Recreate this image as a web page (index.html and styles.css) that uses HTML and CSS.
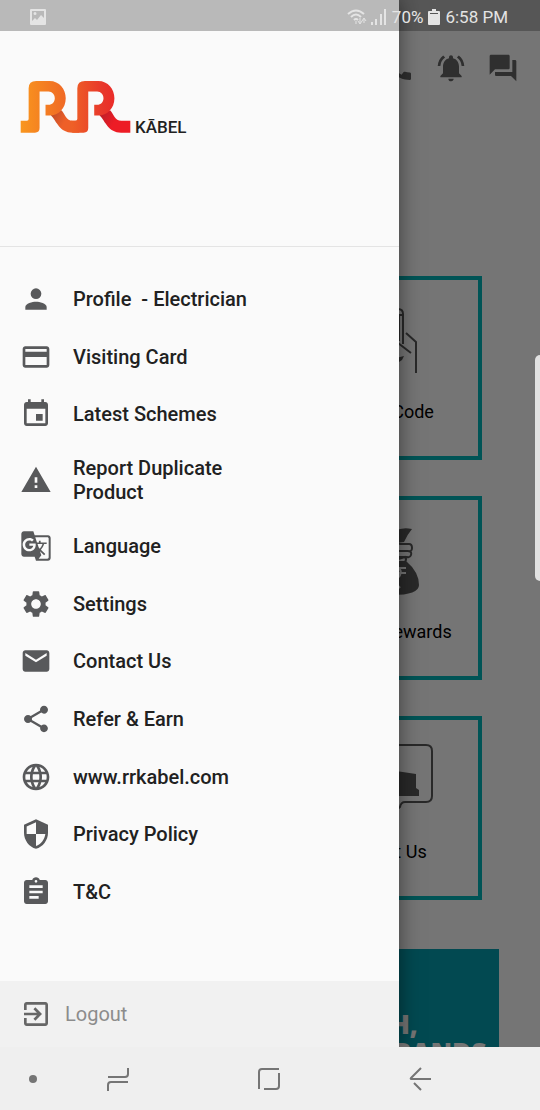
FILE: index.html
```html
<!DOCTYPE html>
<html lang="en">
<head>
<meta charset="utf-8">
<meta name="viewport" content="width=device-width, initial-scale=1">
<title>RR Kabel</title>
<link rel="stylesheet" href="styles.css">
</head>
<body>
<div class="phone">
  <div class="screen">
    <main class="home">
      <header class="toolbar">
        <button class="icon-button" aria-label="Call"><svg class="icon" viewBox="0 0 24 24"><path d="M20.01 15.38c-1.23 0-2.42-.2-3.53-.56a.98.98 0 0 0-1.01.24l-1.57 1.97c-2.83-1.35-5.48-3.9-6.89-6.83l1.95-1.66c.27-.28.35-.67.24-1.02-.37-1.11-.56-2.3-.56-3.53 0-.54-.45-.99-.99-.99H4.19C3.65 3 3 3.24 3 3.99 3 13.28 10.73 21 20.01 21c.71 0 .99-.63.99-1.18v-3.45c0-.54-.45-.99-.99-.99z"/></svg></button>
        <button class="icon-button" aria-label="Notifications"><svg class="icon" viewBox="0 0 24 24"><path d="M7.58 4.08 6.15 2.65C3.75 4.48 2.17 7.3 2.03 10.5h2a8.45 8.45 0 0 1 3.55-6.42zM19.97 10.5h2c-.15-3.2-1.73-6.02-4.12-7.85l-1.42 1.43a8.495 8.495 0 0 1 3.54 6.42zM18 11c0-3.07-1.64-5.64-4.5-6.32V4c0-.83-.67-1.5-1.5-1.5s-1.5.67-1.5 1.5v.68C7.63 5.36 6 7.92 6 11v5l-2 2v1h16v-1l-2-2v-5zm-6 11c.14 0 .27-.01.4-.04.65-.14 1.18-.58 1.44-1.18.1-.24.15-.5.15-.78h-4c.01 1.1.9 2 2.01 2z"/></svg></button>
        <button class="icon-button" aria-label="Messages"><svg class="icon" viewBox="0 0 24 24"><path d="M21 6h-2v9H6v2c0 .55.45 1 1 1h11l4 4V7c0-.55-.45-1-1-1zm-4 6V3c0-.55-.45-1-1-1H3c-.55 0-1 .45-1 1v14l4-4h10c.55 0 1-.45 1-1z"/></svg></button>
      </header>
      <section class="tiles">
        <a class="tile" href="#code">
          <svg class="tile-art" viewBox="0 0 88 72" fill="none" stroke="currentColor" stroke-width="2"><path d="M24 40V10q0-5 5-5h23q5 0 5 5v30M28 11h28M53 11v26M60 29l10 9v31M52 39l13 10M24 44l14 14v11" stroke-linejoin="round"/><path fill="currentColor" stroke="none" d="m50 54 8-2-2 4-6 4z"/></svg>
          <span>Enter Code</span>
        </a>
        <a class="tile" href="#rewards">
          <svg class="tile-art" viewBox="0 0 88 72"><path fill="currentColor" d="M50 19 38 8q5-4 11-1 7-4 17-2-5 6-8 13zM38 37h22q13 11 13 24 0 10-27 10T19 61q0-13 19-24z"/><path d="M42 20q7-3 12 0h9q3 0 3 4t-4 3h-9m10 0q3 1 2 4t-4 2h-9m7 0q2 2 0 5H42z" fill="none" stroke="currentColor" stroke-width="2"/><path class="coin" d="M43 44h17M43 49h17M43 44h5q9 0 6 7-1 4-8 4l8 9" fill="none" stroke-width="2"/></svg>
          <span>Check Rewards</span>
        </a>
        <a class="tile" href="#about">
          <svg class="tile-art" viewBox="0 0 88 72"><path d="M8 1h72q6 0 6 6v45q0 6-6 6H59q-4 0-5 5l-10 8-8-13H8q-6 0-6-6V7q0-6 6-6z" fill="none" stroke="currentColor" stroke-width="2"/><path fill="currentColor" d="M24 34 50 27l20 3v14l3 2v6H24z"/></svg>
          <span>About Us</span>
        </a>
      </section>
      <section class="banner"><p>A SWITCH,<br>TO BIG BRANDS</p></section>
    </main>
    <div class="scrim"></div>

    <aside class="drawer">
      <div class="brand">
        <svg class="brand-mark" viewBox="62 243 333 157" role="img" aria-label="RR">
          <defs>
            <linearGradient id="warm" gradientUnits="userSpaceOnUse" x1="63" y1="0" x2="394" y2="0"><stop offset="0" stop-color="#f9961e"/><stop offset=".4" stop-color="#f06a25"/><stop offset=".75" stop-color="#e8372b"/><stop offset="1" stop-color="#ee1c25"/></linearGradient>
            <linearGradient id="leg1" x1="0" y1="0" x2="1" y2=".4"><stop offset="0" stop-color="#b84a2a"/><stop offset=".6" stop-color="#ee5f28"/></linearGradient>
            <linearGradient id="leg2" x1="0" y1="0" x2="1" y2=".4"><stop offset="0" stop-color="#b3202a"/><stop offset=".6" stop-color="#ed1c25"/></linearGradient>
          </defs>
          <path fill="url(#leg1)" d="M153 345 186 331C197 343 200 363 220 363H240V399H219C181 399 173 367 153 345z"/>
          <path fill="url(#leg2)" d="M300 345 333 331C344 343 347 363 367 363H394V399H366C328 399 320 367 300 345z"/>
          <path fill="url(#warm)" d="M63 363H82Q87 363 87 358V265Q87 243 110 243H150C180 243 199 268 199 295C199 325 178 347 150 347H138V315H147C158 315 166 306 166 295S158 275 147 275H120V385Q120 399 106 399H63z"/>
          <path fill="url(#warm)" d="M215 363H228Q234 363 234 358V265Q234 243 257 243H297C327 243 346 268 346 295C346 325 325 347 297 347H285V315H294C305 315 313 306 313 295S305 275 294 275H267V385Q267 399 253 399H219z"/>
        </svg>
        <span class="brand-name">KĀBEL</span>
      </div>
      <nav class="menu">
        <a class="menu-item" href="#profile"><svg class="icon" viewBox="0 0 24 24"><circle cx="12" cy="8" r="4"/><path d="M12 14c-2.670 0-8 1.340-8 4v2h16v-2c0-2.660-5.330-4-8-4z"/></svg><span>Profile&nbsp; - Electrician</span></a>
        <a class="menu-item" href="#card"><svg class="icon" viewBox="0 0 24 24"><path d="M20 4H4c-1.110 0-1.990.89-1.990 2L2 18c0 1.110.89 2 2 2h16c1.110 0 2-.89 2-2V6c0-1.110-.89-2-2-2zm0 14H4v-6h16v6zm0-10H4V6h16v2z"/></svg><span>Visiting Card</span></a>
        <a class="menu-item" href="#schemes"><svg class="icon" viewBox="0 0 24 24"><path d="M17 12h-5v5h5v-5zM16 1v2H8V1H6v2H5c-1.110 0-1.990.9-1.990 2L3 19c0 1.100.89 2 2 2h14c1.100 0 2-.9 2-2V5c0-1.100-.9-2-2-2h-1V1h-2zm3 18H5V8h14v11z"/></svg><span>Latest Schemes</span></a>
        <a class="menu-item menu-item-tall" href="#report"><svg class="icon" viewBox="0 0 24 24"><path d="M1 21h22L12 2 1 21zm12-3h-2v-2h2v2zm0-4h-2v-4h2v4z"/></svg><span>Report Duplicate Product</span></a>
        <a class="menu-item" href="#language"><svg class="icon" viewBox="0 0 24 24"><path d="M21 4H11l-1-3H3c-1.100 0-2 .9-2 2v15c0 1.100.9 2 2 2h8l1 3h9c1.100 0 2-.9 2-2V6c0-1.100-.9-2-2-2zM7 16c-2.760 0-5-2.240-5-5s2.240-5 5-5c1.350 0 2.480.5 3.350 1.300L9.030 8.570c-.38-.36-1.040-.78-2.030-.78-1.740 0-3.150 1.440-3.150 3.210S5.260 14.210 7 14.210c2.010 0 2.840-1.440 2.920-2.410H7v-1.710h4.680c.07.31.12.61.12 1.020C11.800 13.970 9.890 16 7 16zm6.170-5.420h3.700c-.43 1.250-1.110 2.430-2.050 3.470-.31-.35-.6-.72-.86-1.100l-.79-2.370zm8.330 9.920c0 .55-.45 1-1 1H14l2-2.500-1.040-3.100 3.100 3.100.92-.92-3.300-3.250.02-.02c1.130-1.250 1.930-2.690 2.400-4.220H20v-1.300h-4.530V8h-1.290v1.290h-1.440L11.460 5.500h9.040c.55 0 1 .45 1 1v14z"/></svg><span>Language</span></a>
        <a class="menu-item" href="#settings"><svg class="icon" viewBox="0 0 24 24"><path d="M19.140 12.940c.04-.3.06-.61.06-.94 0-.32-.02-.64-.07-.94l2.030-1.580c.18-.14.23-.41.12-.61l-1.920-3.320c-.12-.22-.37-.29-.59-.22l-2.390.96c-.5-.38-1.030-.7-1.620-.94l-.36-2.540c-.04-.24-.24-.41-.48-.41h-3.840c-.24 0-.43.17-.47.41l-.36 2.540c-.59.24-1.130.57-1.620.94l-2.390-.96c-.22-.08-.47 0-.59.22L2.740 8.870c-.12.21-.08.47.12.61l2.030 1.580c-.05.3-.09.63-.09.94s.02.64.07.94l-2.030 1.580c-.18.14-.23.41-.12.61l1.920 3.320c.12.22.37.29.59.22l2.390-.96c.5.38 1.030.7 1.620.94l.36 2.540c.05.24.24.41.48.41h3.840c.24 0 .44-.17.47-.41l.36-2.540c.59-.24 1.130-.56 1.620-.94l2.390.96c.22.08.47 0 .59-.22l1.920-3.320c.12-.22.07-.47-.12-.61l-2.010-1.580zM12 15.600c-1.980 0-3.600-1.620-3.600-3.600s1.620-3.600 3.600-3.600 3.600 1.620 3.600 3.600-1.620 3.600-3.600 3.600z"/></svg><span>Settings</span></a>
        <a class="menu-item" href="#contact"><svg class="icon" viewBox="0 0 24 24"><path d="M20 4H4c-1.100 0-1.990.9-1.990 2L2 18c0 1.100.9 2 2 2h16c1.100 0 2-.9 2-2V6c0-1.100-.9-2-2-2zm0 4-8 5-8-5V6l8 5 8-5v2z"/></svg><span>Contact Us</span></a>
        <a class="menu-item" href="#refer"><svg class="icon" viewBox="0 0 24 24"><path d="M18 16.080c-.76 0-1.440.3-1.960.77L8.910 12.700c.05-.23.09-.46.09-.7s-.04-.47-.09-.7l7.050-4.110c.54.5 1.250.81 2.040.81 1.660 0 3-1.340 3-3s-1.340-3-3-3-3 1.340-3 3c0 .24.04.47.09.7L8.040 9.810C7.500 9.310 6.790 9 6 9c-1.660 0-3 1.340-3 3s1.340 3 3 3c.79 0 1.500-.31 2.040-.81l7.120 4.160c-.05.21-.08.43-.08.65 0 1.610 1.310 2.920 2.920 2.920s2.920-1.310 2.920-2.920-1.310-2.920-2.920-2.920z"/></svg><span>Refer &amp; Earn</span></a>
        <a class="menu-item" href="#site"><svg class="icon" viewBox="0 0 24 24"><path d="M11.990 2C6.470 2 2 6.480 2 12s4.470 10 9.990 10C17.520 22 22 17.520 22 12S17.520 2 11.990 2zm6.930 6h-2.950c-.32-1.250-.78-2.450-1.380-3.560 1.840.63 3.370 1.910 4.330 3.560zM12 4.040c.83 1.200 1.480 2.530 1.910 3.960h-3.820c.43-1.430 1.080-2.760 1.910-3.960zM4.260 14C4.100 13.360 4 12.690 4 12s.1-1.360.26-2h3.380c-.08.66-.14 1.320-.14 2s.06 1.340.14 2H4.260zm.82 2h2.950c.32 1.250.78 2.450 1.380 3.560-1.840-.63-3.370-1.900-4.330-3.560zm2.950-8H5.080c.96-1.660 2.490-2.930 4.330-3.560C8.810 5.550 8.350 6.750 8.030 8zM12 19.960c-.83-1.200-1.480-2.530-1.910-3.960h3.820c-.43 1.430-1.080 2.760-1.910 3.960zM14.340 14H9.660c-.09-.66-.16-1.320-.16-2s.07-1.350.16-2h4.680c.09.65.16 1.320.16 2s-.07 1.340-.16 2zm.25 5.560c.6-1.110 1.060-2.310 1.380-3.560h2.950c-.96 1.650-2.490 2.930-4.330 3.560zM16.360 14c.08-.66.14-1.320.14-2s-.06-1.340-.14-2h3.380c.16.640.26 1.310.26 2s-.1 1.360-.26 2h-3.380z"/></svg><span>www.rrkabel.com</span></a>
        <a class="menu-item" href="#privacy"><svg class="icon" viewBox="0 0 24 24"><path d="M12 1 3 5v6c0 5.550 3.840 10.740 9 12 5.160-1.260 9-6.450 9-12V5l-9-4zm0 10.990h7c-.53 4.120-3.280 7.790-7 8.940V12H5V6.300l7-3.110v8.800z"/></svg><span>Privacy Policy</span></a>
        <a class="menu-item" href="#terms"><svg class="icon" viewBox="0 0 24 24"><path d="M19 3h-4.180C14.400 1.840 13.300 1 12 1c-1.300 0-2.400.84-2.820 2H5c-1.100 0-2 .9-2 2v14c0 1.100.9 2 2 2h14c1.100 0 2-.9 2-2V5c0-1.100-.9-2-2-2zm-7 0c.55 0 1 .45 1 1s-.45 1-1 1-1-.45-1-1 .45-1 1-1zm2 14H7v-2h7v2zm3-4H7v-2h10v2zm0-4H7V7h10v2z"/></svg><span>T&amp;C</span></a>
      </nav>
      <button class="logout"><svg class="icon" viewBox="0 0 24 24"><path d="M10.090 15.590 11.500 17l5-5-5-5-1.410 1.410L12.670 11H3v2h9.670l-2.580 2.590zM19 3H5c-1.110 0-2 .9-2 2v4h2V5h14v14H5v-4H3v4c0 1.100.89 2 2 2h14c1.100 0 2-.9 2-2V5c0-1.100-.9-2-2-2z"/></svg><span>Logout</span></button>
    </aside>

    <div class="status">
      <svg class="status-photo" viewBox="0 0 16 16"><path fill-rule="evenodd" d="M1 0h14q1 0 1 1v14q0 1-1 1H1q-1 0-1-1V1q0-1 1-1zm1 2v10l3-3 2 2 4-5 3 3V2zm3 1a1.500 1.500 0 1 1 0 3 1.500 1.500 0 0 1 0-3z"/></svg>
      <svg class="status-wifi" viewBox="0 0 20 16" fill="none" stroke="currentColor" stroke-width="2"><path d="M1 5q8-7 16 0M4 8q5-5 10 0M7 11q2-2 4 0"/><path d="m9 12v3M13 9v5m-2-2 2 3 2-3M17 14v-4m-2 2 2-3 2 3" stroke-width="1"/></svg>
      <svg class="status-signal" viewBox="0 0 16 16"><path d="M0 13h2v3H0zM4 10h2v6H4zM9 5h2v11H9zM13 0h2v16h-2z"/></svg>
      <span>70%</span>
      <svg class="status-battery" viewBox="0 0 12 16"><path fill-rule="evenodd" d="M4 0h4v2h3q1 0 1 1v12q0 1-1 1H1q-1 0-1-1V3q0-1 1-1h3zM2 4v1h8V4z"/></svg>
      <span>6:58 PM</span>
    </div>
    <div class="edge-handle"></div>
  </div>

  <nav class="system-nav">
    <button class="system-dot" aria-label="Pin navigation bar"><svg viewBox="0 0 8 8"><circle cx="4" cy="4" r="4" fill="currentColor"/></svg></button>
    <button aria-label="Recent apps"><svg class="system-icon" viewBox="0 0 24 24"><path d="M2 10h17q3 0 3-3V1M22 15H5q-3 0-3 3v6"/></svg></button>
    <button aria-label="Home"><svg class="system-icon" viewBox="0 0 24 24"><path d="M2 22V5q0-3 3-3h17M22 6v13q0 3-3 3H7"/></svg></button>
    <button aria-label="Back"><svg class="system-icon" viewBox="0 0 24 24"><path d="M13 1 3 11q-1 1 1 1h19M6 16l7 7"/></svg></button>
  </nav>
</div>
</body>
</html>
```
FILE: styles.css
```css
* { box-sizing: border-box; }

body {
  margin: 0;
  font-family: Roboto, "Liberation Sans", sans-serif;
  color: #212121;
}

a { color: inherit; text-decoration: none; }

button {
  padding: 0;
  border: 0;
  background: none;
  color: inherit;
  font: inherit;
}

svg { display: block; flex: none; }

.phone {
  display: flex;
  flex-direction: column;
  height: 100vh;
}

.screen {
  position: relative;
  flex: 1;
  min-height: 0;
  overflow: hidden;
}

.icon { width: 32px; height: 32px; fill: currentColor; }

/* Home page under the drawer */
.home {
  height: 100%;
  overflow: hidden;
  padding-top: 31px;
  background: #fff;
}

.toolbar {
  display: flex;
  justify-content: flex-end;
  gap: 20px;
  padding: 21px 21px 192px;
  color: #666;
}

.tiles {
  display: flex;
  flex-direction: column;
  align-items: flex-end;
  gap: 36px;
  padding-right: 58px;
}

.tile {
  display: flex;
  flex-direction: column;
  align-items: center;
  gap: 24px;
  width: 184px;
  height: 184px;
  padding-top: 24px;
  border: 4px solid #00b8bc;
  color: #000;
  font-size: 18px;
  line-height: 24px;
}

.tile-art { width: 88px; height: 72px; color: #5a5a5a; }

.coin { stroke: #fff; }

.banner {
  height: 200px;
  margin: 49px 41px 0;
  padding: 61px 0 0 240px;
  background: #06a0b0;
  color: #fff;
  font: 800 26px/28px "Open Sans", sans-serif;
}

.banner p { margin: 0; white-space: nowrap; }

.scrim {
  position: absolute;
  inset: 0;
  background: rgba(0, 0, 0, .54);
}

/* Drawer */
.drawer {
  position: absolute;
  inset: 0 26.1% 0 0;
  display: flex;
  flex-direction: column;
  background: #fafafa;
  box-shadow: 0 0 20px rgba(0, 0, 0, .5);
}

.brand {
  display: flex;
  align-items: flex-start;
  gap: 4px;
  height: 247px;
  padding: 81px 20px 0;
  border-bottom: 1px solid #e4e4e4;
}

.brand-mark { width: 111px; height: 52px; }

.brand-name {
  padding-top: 36px;
  font-size: 17px;
  font-weight: 500;
  line-height: 20px;
}

.menu {
  flex: 1;
  display: flex;
  flex-direction: column;
  padding: 23px 20px 60px;
  font-size: 20px;
  font-weight: 500;
  line-height: 24px;
}

.menu-item {
  flex: 1 0 57px;
  display: flex;
  align-items: center;
  gap: 21px;
}

.menu-item-tall { flex-basis: 73px; }

.menu-item span { max-width: 180px; }

.menu-item .icon { color: #58595b; }

.logout {
  display: flex;
  align-items: center;
  gap: 13px;
  height: 66px;
  padding: 0 20px;
  background: #f1f1f1;
  color: #8c8c8c;
  font-size: 20px;
}

.logout .icon { color: #666; }

/* System overlays */
.status {
  position: absolute;
  inset: 0 0 auto;
  display: flex;
  align-items: center;
  height: 31px;
  padding: 2px 32px 0 30px;
  background: rgba(0, 0, 0, .26);
  color: #e4e4e4;
  font-size: 17px;
  line-height: 24px;
}

.status svg { height: 16px; fill: currentColor; }
.status .status-photo { width: 16px; margin-right: auto; }
.status .status-wifi { width: 20px; margin-right: 4px; fill: none; }
.status .status-signal { width: 16px; margin-right: 5px; }
.status .status-battery { width: 12px; margin: 0 5px; }

.edge-handle {
  position: absolute;
  top: 355px;
  right: 0;
  width: 5px;
  height: 226px;
  border-radius: 5px 0 0 5px;
  background: #e2e2e2;
}

.system-nav {
  display: grid;
  grid-template-columns: 43px 1fr 1fr 1fr;
  height: 63px;
  padding-right: 45px;
  background: #efefef;
  color: #757575;
}

.system-nav button {
  display: flex;
  align-items: center;
  justify-content: center;
}

.system-nav .system-dot { justify-content: flex-end; padding-right: 6px; }
.system-dot svg { width: 8px; height: 8px; }

.system-icon {
  width: 24px;
  height: 24px;
  fill: none;
  stroke: currentColor;
  stroke-width: 2;
}
```
